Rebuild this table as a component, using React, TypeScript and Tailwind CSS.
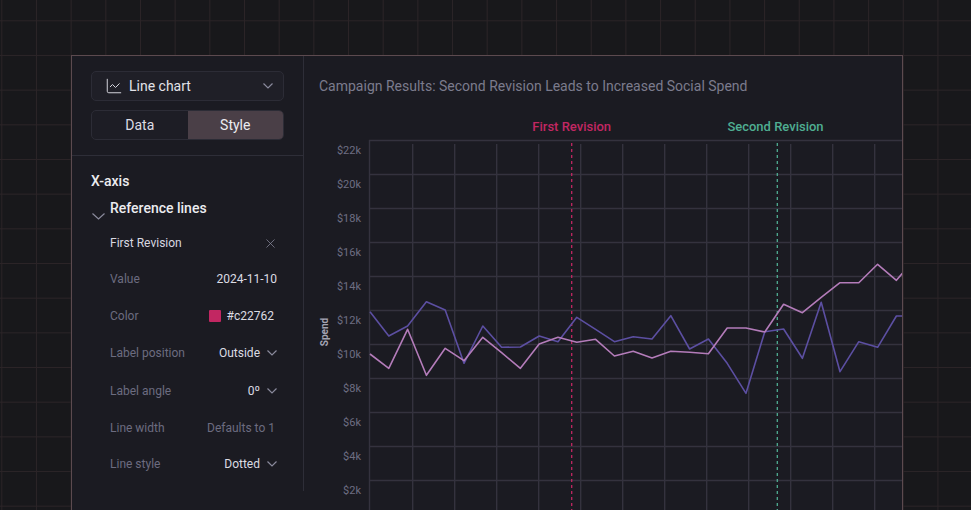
import { LineChart, X } from "lucide-react";

const purple = [
  311.7, 336, 326, 301.7, 310, 363.3, 326, 347.3, 347, 336, 341.7, 317.3, 329.3, 341.7, 336.7,
  339, 315.7, 349, 339, 363.3, 393.3, 331.7, 329, 358.3, 302.3, 371.7, 341.7, 347.3, 316, 316,
];
const pink = [
  354, 368.3, 329.3, 375.3, 348.3, 360.7, 337.3, 352.7, 368.3, 344, 337.3, 342.3, 339.3, 356, 351.3,
  358, 351.3, 352.3, 353.7, 328, 328, 332, 304.3, 312.7, 297.3, 282.7, 282.7, 264.3, 280.3, 258,
];

const toPoints = (ys: number[]) => ys.map((y, i) => `${(370 + 18.8 * i).toFixed(1)},${y}`).join(" ");

const yTicks = ["$22k", "$20k", "$18k", "$16k", "$14k", "$12k", "$10k", "$8k", "$6k", "$4k", "$2k"];

function Chevron({ className = "" }: { className?: string }) {
  return (
    <svg width="10" height="6" viewBox="0 0 10 6" className={className} fill="none">
      <path d="M0.5 0.5 5 5 9.5 0.5" stroke="#8a8a9c" strokeWidth="1.2" />
    </svg>
  );
}

function Row({ label, className, children }: { label: string; className: string; children: React.ReactNode }) {
  return (
    <div className={`flex items-center justify-between pl-[19px] pr-[7px] ${className}`}>
      <span className="text-[12px] text-[#6c6c80]">{label}</span>
      <div className="flex items-center">{children}</div>
    </div>
  );
}

function Sidebar() {
  return (
    <div className="h-[435px] w-[232px] shrink-0 border-r border-[#2e2e38]">
      <div className="border-b border-[#2e2e38] px-[19px] pt-[15px] pb-[15px]">
        <div className="flex h-[30px] items-center justify-between rounded-[5px] border border-[#2c2c36] bg-[#1f1f27] pl-[13px] pr-[10px]">
          <div className="flex items-center gap-[6px] text-[14px] text-[#e2e2e8]">
            <LineChart size={18} strokeWidth={1.3} className="text-[#d8d8e0]" />
            <span>Line chart</span>
          </div>
          <Chevron />
        </div>
        <div className="mt-[9px] flex h-[30px] rounded-[5px] border border-[#2c2c36] bg-[#1d1d25] text-[14px]">
          <div className="flex flex-1 items-center justify-center text-[#dcdce4]">Data</div>
          <div className="flex flex-1 items-center justify-center rounded-r-[4px] bg-[#4a3f47] text-[#ececf0]">Style</div>
        </div>
      </div>
      <div className="px-[19px] pt-[15px]">
        <div className="h-[20px] text-[14px] leading-[20px] font-medium text-[#ececf0]">X-axis</div>
        <div className="mt-[7px] flex items-start">
          <svg width="13" height="7" viewBox="0 0 13 7" className="mt-[15px] ml-[1px]" fill="none">
            <path d="M0.5 0.5 6.5 6 12.5 0.5" stroke="#8a8a9c" strokeWidth="1.2" />
          </svg>
          <span className="ml-[5px] h-[20px] text-[14px] leading-[20px] font-medium text-[#ececf0]">Reference lines</span>
        </div>
        <div className="mt-[5px] flex h-[36px] items-center justify-between pl-[19px] pr-[6px]">
          <span className="text-[12px] text-[#d8d8e0]">First Revision</span>
          <X size={15} strokeWidth={1.2} className="text-[#8a8a9c]" />
        </div>
        <Row label="Value" className="h-[36px]">
          <span className="text-[12px] text-[#dcdce4]">2024-11-10</span>
        </Row>
        <Row label="Color" className="h-[37px]">
          <span className="mr-[6px] h-[12px] w-[12px] rounded-[1px] bg-[#c22762]" />
          <span className="mr-[3px] text-[12px] text-[#dcdce4]">#c22762</span>
        </Row>
        <Row label="Label position" className="h-[38px]">
          <span className="mr-[7px] text-[12px] text-[#dcdce4]">Outside</span>
          <Chevron />
        </Row>
        <Row label="Label angle" className="h-[38px]">
          <span className="mr-[7px] text-[12px] text-[#dcdce4]">0º</span>
          <Chevron />
        </Row>
        <Row label="Line width" className="h-[36px]">
          <span className="mr-[2px] text-[12px] text-[#6c6c80]">Defaults to 1</span>
        </Row>
        <Row label="Line style" className="h-[36px]">
          <span className="mr-[7px] text-[12px] text-[#dcdce4]">Dotted</span>
          <Chevron />
        </Row>
      </div>
    </div>
  );
}

function Chart() {
  const hLines = Array.from({ length: 11 }, (_, k) => 140.5 + 34 * k);
  const vLines = Array.from({ length: 12 }, (_, k) => 412.7 + 42 * k);
  return (
    <svg width="598" height="414" viewBox="304 96 598 414" className="block">
      {hLines.map((y) => (
        <line key={y} x1={369} x2={902} y1={y} y2={y} stroke="#34323e" strokeWidth="1.4" />
      ))}
      <line x1={369.5} x2={369.5} y1={140} y2={510} stroke="#34323e" strokeWidth="1.4" />
      {vLines.map((x) => (
        <line key={x} x1={x} x2={x} y1={144} y2={510} stroke="#34323e" strokeWidth="1.4" />
      ))}
      {yTicks.map((t, k) => (
        <text
          key={t}
          x={361}
          y={150.5 + 34 * k}
          textAnchor="end"
          dominantBaseline="central"
          fontSize="11"
          fill="#6e6e82"
        >
          {t}
        </text>
      ))}
      <text
        x={324}
        y={332}
        transform="rotate(-90 324 332)"
        textAnchor="middle"
        dominantBaseline="central"
        fontSize="10"
        fontWeight="700"
        fill="#a3a3b2"
      >
        Spend
      </text>
      <text x={571.7} y={126} textAnchor="middle" dominantBaseline="central" fontSize="13" fontWeight="500" fill="#c22762">
        First Revision
      </text>
      <text x={775.5} y={126} textAnchor="middle" dominantBaseline="central" fontSize="13" fontWeight="500" fill="#4fae92">
        Second Revision
      </text>
      <line x1={571.7} x2={571.7} y1={143} y2={510} stroke="#c22762" strokeWidth="1.3" strokeDasharray="3 3" />
      <line x1={777.3} x2={777.3} y1={143} y2={510} stroke="#4fae92" strokeWidth="1.3" strokeDasharray="3 3" />
      <polyline points={toPoints(purple)} fill="none" stroke="#5c4fa2" strokeWidth="1.6" strokeLinejoin="round" />
      <polyline points={toPoints(pink)} fill="none" stroke="#b47cba" strokeWidth="1.6" strokeLinejoin="round" />
    </svg>
  );
}

export default function App() {
  return (
    <div
      className="h-[510px] w-[971px] overflow-hidden bg-[#18181b] bg-[linear-gradient(to_right,#2b2427_1px,transparent_1px),linear-gradient(to_bottom,#2b2427_1px,transparent_1px)] bg-size-[34.68px_34.68px] bg-position-[1.3px_20.3px] pt-[55px] pl-[71px] font-['Roboto',sans-serif]"
    >
      <div className="flex h-[480px] w-[832px] border border-[#5c4a4f] bg-[#1b1b22]">
        <Sidebar />
        <div className="flex-1">
          <div className="h-[40px] pt-[20px] pl-[15px] text-[14px] leading-[20px] text-[#7b7b8d]">
            Campaign Results: Second Revision Leads to Increased Social Spend
          </div>
          <Chart />
        </div>
      </div>
    </div>
  );
}
